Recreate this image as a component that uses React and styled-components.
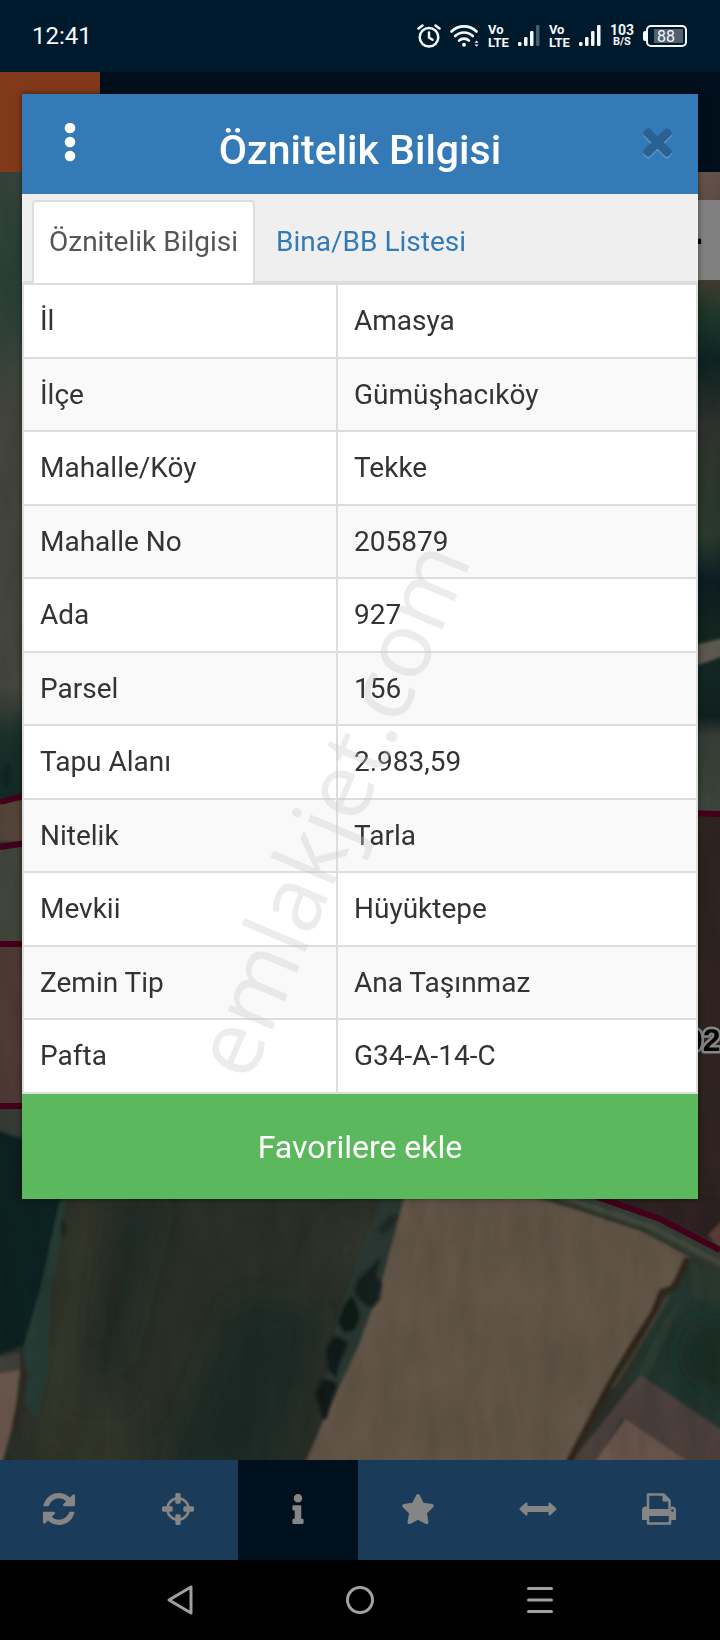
import React from 'react';
import styled, { createGlobalStyle } from 'styled-components'
import { FaInfo, FaStar, FaTimes } from 'react-icons/fa'

const GlobalStyle = createGlobalStyle`
  * {
    box-sizing: border-box;
  }

  body {
    margin: 0;
    background-color: #000;
    font-family: Roboto, "Liberation Sans", sans-serif;
    color: #333;
  }

  button {
    border: 0;
    padding: 0;
    background: none;
    font-family: inherit;
    cursor: pointer;
  }
`

const Screen = styled.div`
  position: relative;
  display: flex;
  flex-direction: column;
  min-height: 100vh;
`

const StatusBar = styled.div`
  display: flex;
  align-items: center;
  justify-content: space-between;
  height: 72px;
  padding: 0 33px 0 32px;
  background-color: #001a2d;
  color: #f4f8fa;
`

const Clock = styled.span`
  font-size: 24px;
  line-height: 28px;
`

const StatusIcons = styled.div`
  display: flex;
  align-items: center;
  gap: 9px;

  svg {
    display: block;
  }
`

const Stacked = styled.span`
  display: flex;
  flex-direction: column;
  align-items: ${props => props.$center ? 'center' : 'flex-start'};
  font-size: ${props => props.$center ? '14px' : '13px'};
  line-height: ${props => props.$center ? '12px' : '13px'};
  font-weight: 700;
`

const SmallLine = styled.span`
  font-size: 11px;
`

const Battery = styled.span`
  display: flex;
  align-items: center;

  &::before {
    content: '';
    width: 3px;
    height: 10px;
    border-radius: 2px 0 0 2px;
    background-color: #f4f8fa;
  }
`

const BatteryBody = styled.span`
  display: flex;
  width: 41px;
  height: 22px;
  padding: 2px 2px 2px 6px;
  border: 2px solid #f4f8fa;
  border-radius: 5px;
`

const BatteryLevel = styled.span`
  width: 29px;
  padding-left: 3px;
  background-color: #53616e;
  font-size: 16px;
  line-height: 15px;
`

const AppHeader = styled.header`
  height: 100px;
  background-color: #000f1b;
`

const MenuButton = styled.button`
  display: block;
  width: 100px;
  height: 100px;
  background-color: #80391b;
`

const MapArea = styled.div`
  flex: 1;
  min-height: 1288px;
  display: grid;
  overflow: hidden;
  background-color: #2a3029;

  > * {
    grid-area: 1 / 1;
  }
`

const MapDrawing = styled.svg`
  display: block;
  width: 100%;
  height: 1288px;
`

const MapControl = styled.button`
  justify-self: end;
  align-self: start;
  width: 80px;
  height: 80px;
  padding-right: 16px;
  margin-top: 28px;
  background-color: #808080;
  color: #000;
  font-size: 48px;
  font-weight: 700;
  line-height: 80px;
  text-align: right;
`

const ToolBar = styled.nav`
  display: grid;
  grid-template-columns: 59fr repeat(4, 60fr) 61fr;
  height: 100px;
  background-color: #1a3c5a;
`

const ToolButton = styled.button`
  display: flex;
  align-items: center;
  justify-content: center;
  padding-bottom: 2px;
  background-color: ${props => props.$active ? '#00101c' : 'transparent'};
  color: #858585;
`

const SystemBar = styled.nav`
  display: flex;
  align-items: center;
  justify-content: center;
  gap: 150px;
  height: 80px;
  background-color: #000;
`

const SystemButton = styled.button`
  display: flex;
  color: #a0a0a0;
`

const Modal = styled.section`
  position: absolute;
  top: 94px;
  left: 22px;
  right: 22px;
  overflow: hidden;
  background-color: #fff;
  box-shadow: 0 0 6px rgba(0, 0, 0, 0.5);
`

const ModalHeader = styled.header`
  display: grid;
  grid-template-columns: 96px 1fr 82px;
  height: 100px;
  background-color: #337ab7;

  h1 {
    margin: 0;
    padding-right: 14px;
    color: #fff;
    font-size: 41px;
    line-height: 113px;
    font-weight: 500;
    text-align: center;
  }
`

const HeaderButton = styled.button`
  display: flex;
  align-items: center;
  justify-content: center;
  height: 96px;
  color: #296292;
`

const CloseIcon = styled(FaTimes)`
  stroke: currentColor;
  stroke-width: 20px;
  filter: drop-shadow(0 2px 0 #5c95c5);
`

const Tabs = styled.div`
  display: flex;
  height: 89px;
  padding: 6px 10px 0;
  border-bottom: 2px solid #ddd;
  background-color: #efefef;
`

// 2px taller than the strip so the active tab covers its bottom border
const Tab = styled.button`
  height: 83px;
  padding: 0 15px 2px;
  margin-right: 4px;
  border: 2px solid ${props => props.$active ? '#ddd' : 'transparent'};
  border-bottom: 0;
  border-radius: 4px 4px 0 0;
  background-color: ${props => props.$active ? '#fff' : 'transparent'};
  color: ${props => props.$active ? '#555' : '#337ab7'};
  font-size: 28px;
  line-height: 40px;
`

const InfoTable = styled.table`
  width: 100%;
  border-collapse: collapse;
  table-layout: fixed;
  font-size: 28px;
  line-height: 40px;

  tr {
    height: 74px;
  }

  tr:nth-child(even) {
    height: 73px;
    background-color: #f9f9f9;
  }

  th,
  td {
    padding: 0 16px;
    border: 2px solid #ddd;
    font-weight: 400;
    text-align: left;
  }

  th {
    width: 314px;
  }
`

const FavoriteButton = styled.button`
  display: block;
  width: 100%;
  height: 105px;
  background-color: #5cb85c;
  color: #fff;
  font-size: 32px;
  line-height: 40px;
`

const Watermark = styled.span`
  position: absolute;
  top: 714px;
  left: 307px;
  transform: translate(-50%, -50%) rotate(-67deg);
  color: rgba(200, 200, 200, 0.35);
  font-family: "Open Sans", "Noto Sans", sans-serif;
  font-size: 91px;
  line-height: 91px;
  pointer-events: none;
`

const rows = [
  ['İl', 'Amasya'],
  ['İlçe', 'Gümüşhacıköy'],
  ['Mahalle/Köy', 'Tekke'],
  ['Mahalle No', '205879'],
  ['Ada', '927'],
  ['Parsel', '156'],
  ['Tapu Alanı', '2.983,59'],
  ['Nitelik', 'Tarla'],
  ['Mevkii', 'Hüyüktepe'],
  ['Zemin Tip', 'Ana Taşınmaz'],
  ['Pafta', 'G34-A-14-C']
]

const Glyph = ({ d }) => (
  <svg width="32" height="32" viewBox="0 0 1536 1536" fill="currentColor" aria-hidden="true">
    <path d={d} />
  </svg>
)

const refreshPath = 'M1511 928q0 5-1 7-64 268-268 434.5T764 1536q-146 0-282.500-55T238 1324l-129 129q-19 19-45 19t-45-19-19-45V960q0-26 19-45t45-19h448q26 0 45 19t19 45-19 45l-137 137q71 66 161 102t187 36q134 0 250-65t186-179q11-17 53-117 8-23 30-23h192q13 0 22.500 9.500t9.500 22.500zM1536 128v448q0 26-19 45t-45 19h-448q-26 0-45-19t-19-45 19-45l138-138Q969 256 768 256q-134 0-250 65T332 500q-11 17-53 117-8 23-30 23H50q-13 0-22.500-9.500T18 608v-7q65-268 270-434.500T768 0q146 0 284 55.500T1297 212l130-129q19-19 45-19t45 19 19 45z'
const crosshairPath = 'M1197 896h-109q-26 0-45-19t-19-45v-128q0-26 19-45t45-19h109q-32-108-112.500-188.500T896 339v109q0 26-19 45t-45 19H704q-26 0-45-19t-19-45V339q-108 32-188.500 112.500T339 640h109q26 0 45 19t19 45v128q0 26-19 45t-45 19H339q32 108 112.500 188.500T640 1197v-109q0-26 19-45t45-19h128q26 0 45 19t19 45v109q108-32 188.500-112.500T1197 896zM1536 704v128q0 26-19 45t-45 19h-143q-37 161-154.500 278.500T896 1329v143q0 26-19 45t-45 19H704q-26 0-45-19t-19-45v-143q-161-37-278.500-154.500T207 896H64q-26 0-45-19t-19-45V704q0-26 19-45t45-19h143q37-161 154.500-278.500T640 207V64q0-26 19-45t45-19h128q26 0 45 19t19 45v143q161 37 278.500 154.500T1329 640h143q26 0 45 19t19 45z'

const PrintIcon = () => (
  <svg width="34" height="32" viewBox="0 0 34 32" fill="none" aria-hidden="true">
    <path d="M6 16V1.500h15.500L27.500 7.500V16" stroke="currentColor" strokeWidth="2.500" strokeLinejoin="round" />
    <path fill="currentColor" d="M20.500 1v7.500H28V7l-6-6zM4 13.500h1V16h24v-2.500h1a4 4 0 0 1 4 4V26q0 1-1 1h-4v-4H5v4H1q-1 0-1-1v-8.500a4 4 0 0 1 4-4z" />
    <circle cx="30.500" cy="17.500" r="1.300" fill="#1a3c5a" />
    <path d="M6 22v8.500h22V22" stroke="currentColor" strokeWidth="2.500" strokeLinejoin="round" />
  </svg>
)

const ArrowsIcon = () => (
  <svg width="38" height="14" viewBox="0 0 38 14" fill="currentColor" aria-hidden="true">
    <path d="M7.500 0.500q1 0 1 1V4h21V1.500q0-1 1-1 .5 0 .8.300l6 5.500q.6.700 0 1.400l-6 5.500q-.3.300-.8.300-1 0-1-1V10h-21v2.500q0 1-1 1-.5 0-.8-.3l-6-5.500q-.6-.7 0-1.400l6-5.500q.3-.3.800-.3z" />
  </svg>
)

const AlarmIcon = () => (
  <svg width="24" height="24" viewBox="0 0 24 24" fill="none" stroke="currentColor" strokeWidth="2.500" strokeLinecap="round" aria-hidden="true">
    <circle cx="12" cy="13.300" r="9.300" />
    <path d="M12 8.500v5l3.500 2.300M1.500 4.500l4-3M22.500 4.500l-4-3" />
  </svg>
)

const WifiIcon = () => (
  <svg width="29" height="24" viewBox="0 0 29 24" fill="none" stroke="currentColor" strokeWidth="2.700" strokeLinecap="round" aria-hidden="true">
    <path d="M1.500 7.500a18 18 0 0 1 25 0M5.300 12a12.500 12.500 0 0 1 17.400 0M9.200 16.500a7 7 0 0 1 9.600 0" />
    <circle cx="14" cy="20.800" r="2" fill="currentColor" stroke="none" />
    <path d="M24.500 18.800l2-2.300 2 2.300zM24.500 20.500l2 2.300 2-2.300z" fill="currentColor" stroke="none" />
  </svg>
)

const SignalIcon = ({ weak }) => (
  <svg width="22" height="22" viewBox="0 0 22 22" fill="currentColor" aria-hidden="true">
    <rect x="0" y="17" width="3.500" height="4" rx="1.200" />
    <rect x="6" y="12" width="3.500" height="9" rx="1.200" />
    <rect x="12" y="6" width="3.500" height="15" rx="1.200" />
    <rect x="18" y="0" width="3.500" height="21" rx="1.200" opacity={weak ? 0.3 : 1} />
  </svg>
)

const MapImage = () => (
  <MapDrawing viewBox="0 172 720 1288" preserveAspectRatio="xMidYMin slice" aria-hidden="true">
    <defs>
      <filter id="soft" x="-40%" y="-40%" width="180%" height="180%">
        <feGaussianBlur stdDeviation="14" />
      </filter>
      <filter id="edge">
        <feGaussianBlur stdDeviation="1.500" />
      </filter>
      <filter id="grain" x="0" y="0" width="100%" height="100%">
        <feTurbulence type="fractalNoise" baseFrequency="0.05 0.015" numOctaves="4" seed="7" />
        <feColorMatrix type="matrix" values="0 0 0 0 0  0 0 0 0 0  0 0 0 0 0  0.700 0 0 0 -0.220" />
      </filter>
      <linearGradient id="left" gradientUnits="userSpaceOnUse" x1="0" y1="172" x2="0" y2="1200">
        <stop offset="0" stopColor="#36453c" />
        <stop offset="0.100" stopColor="#2a4238" />
        <stop offset="0.170" stopColor="#34433a" />
        <stop offset="0.240" stopColor="#45463e" />
        <stop offset="0.500" stopColor="#45463d" />
        <stop offset="0.550" stopColor="#1c302a" />
        <stop offset="0.600" stopColor="#142b26" />
      </linearGradient>
      <linearGradient id="right" gradientUnits="userSpaceOnUse" x1="0" y1="172" x2="0" y2="820">
        <stop offset="0" stopColor="#64524a" />
        <stop offset="0.160" stopColor="#4d3f36" />
        <stop offset="0.220" stopColor="#1e3a2c" />
        <stop offset="0.290" stopColor="#0e2424" />
        <stop offset="0.390" stopColor="#2f332d" />
        <stop offset="0.560" stopColor="#2a3b2e" />
        <stop offset="0.630" stopColor="#0d1c21" />
        <stop offset="0.700" stopColor="#13241f" />
        <stop offset="0.780" stopColor="#142724" />
        <stop offset="0.840" stopColor="#10211f" />
        <stop offset="0.870" stopColor="#363f37" />
        <stop offset="1" stopColor="#3f483e" />
      </linearGradient>
    </defs>

    <rect x="0" y="172" width="360" height="1288" fill="url(#left)" />
    <rect x="360" y="172" width="360" height="648" fill="url(#right)" />
    <rect x="360" y="813" width="360" height="420" fill="#2f2420" />
    <g filter="url(#edge)">
      <path d="M690 646l34-8v18l-34 12z" fill="#5d5850" />
      <rect x="-4" y="800" width="60" height="42" fill="#58473e" />
      <rect x="-4" y="846" width="60" height="98" fill="#40443a" />
      <rect x="-4" y="944" width="60" height="162" fill="#4f3b35" />
      <rect x="-4" y="1106" width="60" height="44" fill="#363c36" />
    </g>

    <path d="M60 1180H420V1460H0V1350z" fill="#2a3028" />
    <g filter="url(#soft)">
      <path d="M75 1195h30l-45 260H25z" fill="#35372b" />
      <path d="M235 1300l85 10-50 170H160z" fill="#1d2a27" />
      <path d="M120 1200h40l-40 160h-40z" fill="#232b26" />
      <path d="M340 1220h50l-40 60-40-10z" fill="#32362c" />
      <path d="M60 1400h70v80H40z" fill="#33362c" />
    </g>
    <g filter="url(#edge)">
      <path d="M-4 1130l30 10V1180L65 1196 52 1240 38 1300 24 1345-4 1356z" fill="#0e2021" />
      <path d="M66 1200L60 1245 50 1300 48 1370 36 1420 22 1400 24 1345 40 1290 60 1200z" fill="#263b34" />
      <path d="M-4 1358l24-6v18l-24 4z" fill="#403f3b" />
      <path d="M-4 1374l24-4-6 50-12 44h-6z" fill="#69574b" />
      <path d="M20 1345l8 30-10 60-6-10 8-40z" fill="#2e2b20" />

      <path d="M405 1195H540L640 1228 690 1257 660 1300 622 1365 566 1466H304L332 1400 358 1345 380 1280z" fill="#625447" />
      <path d="M405 1195l-24 90-22 60-28 60-6-10 10-70 24-70 24-60z" fill="#2b3733" />
      <path d="M520 1194H730V1286L690 1256 640 1228z" fill="#353e35" />
      <path d="M560 1196l90 30 80 42" fill="none" stroke="#474b40" strokeWidth="4" />
      <path d="M552 1200l90 30 90 48" fill="none" stroke="#29312a" strokeWidth="3" />
      <path d="M590 1194H730V1250L660 1219z" fill="#2f2321" />
      <path d="M708 1235l14-14v30z" fill="#5b403b" />
      <path d="M690 1260L730 1280V1446L650 1396 628 1380 650 1330z" fill="#23352d" />
      <path d="M640 1370l24-50 20-24-40 90z" fill="#2b3a32" />
      <path d="M690 1262l32 14v34l-30-14z" fill="#2c382d" />
      <path d="M640 1375L730 1436V1466H694L622 1418 594 1466H568z" fill="#4b413a" />
      <path d="M625 1419L694 1466H592z" fill="#69574e" />
      <path d="M688 1258l-14 30-12 4-8 20-30 48-16 28-40 76" fill="none" stroke="#2f271c" strokeWidth="7" />
      <path d="M668 1296l-36 62-20 30" fill="none" stroke="#4d4434" strokeWidth="2" />
    </g>
    <path d="M684 1350l20-30 26 6v70l-34-16z" fill="#122922" filter="url(#soft)" />
    <g filter="url(#edge)" fill="#101a17">
      <path d="M380 1258l-10 10-12 12-4 12 8 10 10 6 8-8 2-16-6-8z" opacity="0.800" />
      <path d="M352 1296l-8 10-6 16 6 10 10-2 6-14-4-12z" />
      <path d="M334 1336l-8 12 2 22 8 8 4-16 8-18-6-6z" opacity="0.900" />
      <path d="M322 1380l-7 14 4 12 4 14 4-2 4-16 6-18-6-4z" opacity="0.900" />
      <path d="M398 1214l-10 4-10 12 6 4 8-8z" opacity="0.500" />
      <path d="M63 1218l-3 12 3 8 4-8z" opacity="0.600" />
      <path d="M9 764l-6 8 3 14 4-6z" opacity="0.700" />
    </g>
    <rect x="0" y="172" width="720" height="1288" filter="url(#grain)" opacity="0.250" />

    <g fill="none" stroke="#42001a" strokeWidth="6">
      <path d="M0 802L60 786M0 847L60 838M0 944H60M0 1106H60M660 812L720 814" />
      <path d="M580 1191L660 1219 720 1250" />
    </g>
    <text
      x="685"
      y="1051"
      fontFamily="Liberation Sans, sans-serif"
      fontSize="32"
      fontWeight="700"
      fill="#050505"
      stroke="#858585"
      strokeWidth="5"
      strokeLinejoin="round"
      paintOrder="stroke"
    >02</text>
  </MapDrawing>
)

class App extends React.Component {
  state = {
    tab: 'info'
  }

  selectTab = (tab) => {
    this.setState({tab: tab})
  }

  render() {
    const {tab} = this.state

    return (
      <Screen>
        <GlobalStyle />
        <StatusBar>
          <Clock>12:41</Clock>
          <StatusIcons>
            <AlarmIcon />
            <WifiIcon />
            <Stacked><span>Vo</span><span>LTE</span></Stacked>
            <SignalIcon weak />
            <Stacked><span>Vo</span><span>LTE</span></Stacked>
            <SignalIcon />
            <Stacked $center><span>103</span><SmallLine>B/S</SmallLine></Stacked>
            <Battery>
              <BatteryBody><BatteryLevel>88</BatteryLevel></BatteryBody>
            </Battery>
          </StatusIcons>
        </StatusBar>

        <AppHeader>
          <MenuButton aria-label="Menü" />
        </AppHeader>

        <MapArea>
          <MapImage />
          <MapControl aria-label="Uzaklaştır">-</MapControl>
        </MapArea>

        <ToolBar>
          <ToolButton aria-label="Yenile"><Glyph d={refreshPath} /></ToolButton>
          <ToolButton aria-label="Konum"><Glyph d={crosshairPath} /></ToolButton>
          <ToolButton $active aria-label="Bilgi"><FaInfo size={30} /></ToolButton>
          <ToolButton aria-label="Favoriler"><FaStar size={34} /></ToolButton>
          <ToolButton aria-label="Ölçüm"><ArrowsIcon /></ToolButton>
          <ToolButton aria-label="Yazdır"><PrintIcon /></ToolButton>
        </ToolBar>

        <SystemBar>
          <SystemButton aria-label="Geri">
            <svg width="30" height="30" viewBox="0 0 30 30" fill="none" stroke="currentColor" strokeWidth="3" strokeLinejoin="round">
              <path d="M26 2v26L4 15z" />
            </svg>
          </SystemButton>
          <SystemButton aria-label="Ana ekran">
            <svg width="30" height="30" viewBox="0 0 30 30" fill="none" stroke="currentColor" strokeWidth="3">
              <circle cx="15" cy="15" r="12.500" />
            </svg>
          </SystemButton>
          <SystemButton aria-label="Son uygulamalar">
            <svg width="30" height="30" viewBox="0 0 30 30" fill="none" stroke="currentColor" strokeWidth="3" strokeLinecap="round">
              <path d="M3.500 3.500h23M3.500 15h23M3.500 26.500h23" />
            </svg>
          </SystemButton>
        </SystemBar>

        <Modal role="dialog" aria-labelledby="modal-title">
          <ModalHeader>
            <HeaderButton aria-label="Seçenekler">
              <svg width="12" height="40" viewBox="0 0 12 40" fill="#fff">
                <circle cx="6" cy="6" r="5.300" />
                <circle cx="6" cy="20" r="5.300" />
                <circle cx="6" cy="34" r="5.300" />
              </svg>
            </HeaderButton>
            <h1 id="modal-title">Öznitelik Bilgisi</h1>
            <HeaderButton aria-label="Kapat">
              <CloseIcon size={39} />
            </HeaderButton>
          </ModalHeader>

          <Tabs role="tablist">
            <Tab role="tab" $active={tab === 'info'} onClick={() => this.selectTab('info')}>
              Öznitelik Bilgisi
            </Tab>
            <Tab role="tab" $active={tab === 'list'} onClick={() => this.selectTab('list')}>
              Bina/BB Listesi
            </Tab>
          </Tabs>

          <InfoTable>
            <tbody>
              {rows.map(([label, value]) => {
                return <tr key={label}>
                  <th scope="row">{label}</th>
                  <td>{value}</td>
                </tr>
              })}
            </tbody>
          </InfoTable>
          <FavoriteButton>Favorilere ekle</FavoriteButton>
          <Watermark>emlakjet.com</Watermark>
        </Modal>
      </Screen>
    );
  }
}

export default App;
